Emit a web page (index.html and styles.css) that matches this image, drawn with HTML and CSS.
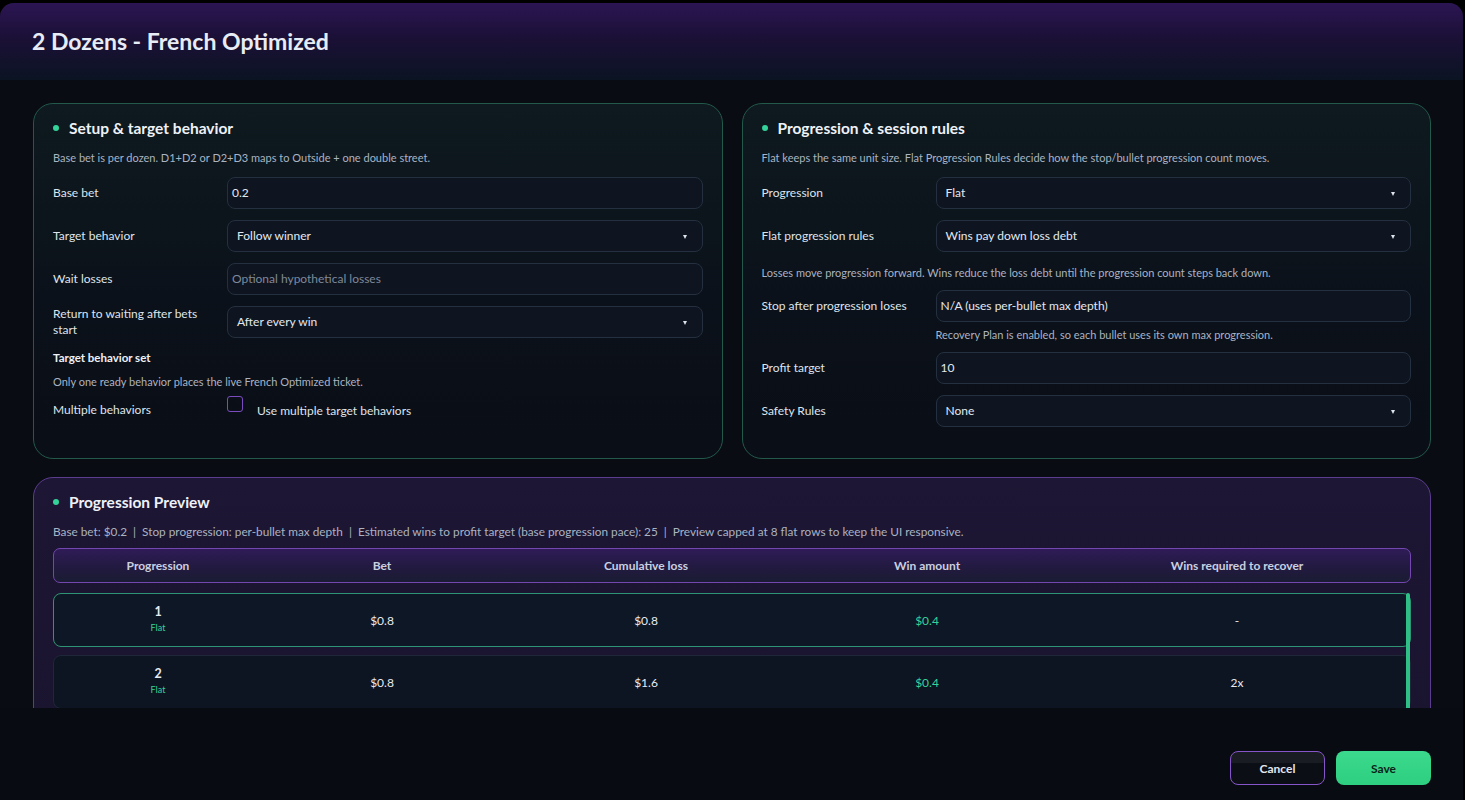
FILE: index.html
```html
<!DOCTYPE html>
<html>
<head>
<meta charset="utf-8">
<title>2 Dozens - French Optimized</title>
<link rel="stylesheet" href="styles.css">
</head>
<body>
<div class="modal">
  <header class="modal-head">
    <h2>2 Dozens - French Optimized</h2>
  </header>

  <div class="modal-body">
    <div class="cols">
      <section class="card card-green">
        <h3 class="card-title"><span class="dot"></span>Setup &amp; target behavior</h3>
        <p class="hint">Base bet is per dozen. D1+D2 or D2+D3 maps to Outside + one double street.</p>

        <div class="form">
          <label>Base bet</label>
          <div class="field">0.2</div>

          <label>Target behavior</label>
          <div class="field select">Follow winner</div>

          <label>Wait losses</label>
          <div class="field placeholder">Optional hypothetical losses</div>

          <label class="two-line">Return to waiting after bets start</label>
          <div class="field select">After every win</div>
        </div>

        <h4 class="sub">Target behavior set</h4>
        <p class="hint">Only one ready behavior places the live French Optimized ticket.</p>
        <div class="form check-row">
          <label>Multiple behaviors</label>
          <div class="check"><span class="box"></span><span>Use multiple target behaviors</span></div>
        </div>
      </section>

      <section class="card card-green">
        <h3 class="card-title"><span class="dot"></span>Progression &amp; session rules</h3>
        <p class="hint">Flat keeps the same unit size. Flat Progression Rules decide how the stop/bullet progression count moves.</p>

        <div class="form">
          <label>Progression</label>
          <div class="field select">Flat</div>

          <label>Flat progression rules</label>
          <div class="field select">Wins pay down loss debt</div>

          <p class="hint wide">Losses move progression forward. Wins reduce the loss debt until the progression count steps back down.</p>

          <label>Stop after progression loses</label>
          <div class="field">N/A (uses per-bullet max depth)</div>

          <p class="hint under">Recovery Plan is enabled, so each bullet uses its own max progression.</p>

          <label>Profit target</label>
          <div class="field">10</div>

          <label>Safety Rules</label>
          <div class="field select">None</div>
        </div>
      </section>
    </div>

    <section class="card card-purple">
      <h3 class="card-title"><span class="dot"></span>Progression Preview</h3>
      <p class="hint summary">Base bet: $0.2 &nbsp;|&nbsp; Stop progression: per-bullet max depth &nbsp;|&nbsp; Estimated wins to profit target (base progression pace): 25 &nbsp;|&nbsp; Preview capped at 8 flat rows to keep the UI responsive.</p>

      <div class="table-head">
        <span>Progression</span>
        <span>Bet</span>
        <span>Cumulative loss</span>
        <span>Win amount</span>
        <span>Wins required to recover</span>
      </div>

      <div class="rows-wrap">
        <div class="rows" id="rows"></div>
        <div class="thumb"></div>
      </div>
    </section>
  </div>

  <footer class="modal-foot">
    <button class="btn btn-cancel">Cancel</button>
    <button class="btn btn-save">Save</button>
  </footer>
</div>

<script>
  // flat progression: same bet every step, loss adds up, wins pay it back
  var bet = 0.8, win = 0.4;
  var rows = document.getElementById('rows');
  for (var i = 1; i <= 8; ++i) {
    var row = document.createElement('div');
    row.className = 'row' + (i === 1 ? ' current' : '');
    var loss = Math.round(bet * i * 10) / 10;
    var need = i === 1 ? '-' : (2 * (i - 1)) + 'x';
    row.innerHTML =
      '<span class="step"><b>' + i + '</b><small>Flat</small></span>' +
      '<span>$' + bet + '</span>' +
      '<span>$' + loss + '</span>' +
      '<span class="win">$' + win + '</span>' +
      '<span>' + need + '</span>';
    rows.appendChild(row);
  }
</script>
</body>
</html>
```

FILE: styles.css
```css
* {
    box-sizing: border-box;
}

html, body {
    margin: 0;
    height: 100%;
    background: #000;
    overflow: hidden;
}

body {
    font-family: "Lato", "Noto Sans", sans-serif;
    color: #e6eaf2;
    font-size: 12px;
    padding-top: 3px;
}

.modal {
    width: 1463px;
    height: 797px;
    display: flex;
    flex-direction: column;
    background: #090c13;
    border-radius: 14px 14px 0 0;
    overflow: hidden;
}

.modal-head {
    height: 77px;
    flex: none;
    padding: 0 32px;
    display: flex;
    align-items: center;
    background: linear-gradient(180deg, #2c1553 0%, #1b1036 45%, #0b1423 100%);
}

.modal-head h2 {
    margin: 0 0 1px;
    font-size: 23px;
    font-weight: 700;
    color: #e8ecf6;
}

.modal-body {
    flex: 1;
    overflow: hidden;
    padding: 23px 32px 0 33px;
}

.cols {
    display: grid;
    grid-template-columns: 1fr 1fr;
    gap: 19px;
    margin-bottom: 18px;
}

.card {
    border-radius: 20px;
    padding: 15px 19px 19px;
}

.card-green {
    border: 1px solid #22594b;
    background: linear-gradient(180deg, #0e1a1f 0%, #0b111a 55%, #0a0e16 100%);
    height: 356px;
}

.card-purple {
    border: 1px solid #5c3c8e;
    background: linear-gradient(180deg, #1d1634 0%, #19142e 100%);
    border-radius: 20px 20px 0 0;
    height: 300px;
}

.card-title {
    margin: 0;
    display: flex;
    align-items: center;
    gap: 10px;
    font-size: 15.5px;
    font-weight: 700;
    color: #eef1f7;
    line-height: 18px;
}

.dot {
    width: 6px;
    height: 6px;
    border-radius: 50%;
    background: #34d399;
}

.hint {
    margin: 14px 0 0;
    font-size: 11px;
    line-height: 14px;
    color: #aab3c2;
}

.hint.summary {
    font-size: 11.8px;
}

.form {
    display: grid;
    grid-template-columns: 160px 1fr;
    column-gap: 14px;
    row-gap: 11px;
    align-items: center;
    margin-top: 12px;
}

.form label {
    color: #dfe4ec;
    line-height: 16px;
}

.form .hint.wide {
    grid-column: 1 / 3;
    margin: 3px 0 -1px;
}

.form .hint.under {
    grid-column: 2;
    margin: -5px 0 -1px;
}

.field {
    position: relative;
    height: 32px;
    line-height: 30px;
    padding: 0 4px;
    border: 1px solid #243040;
    border-radius: 8px;
    background: #0e1521;
    color: #e3e8f0;
}

.field.select {
    padding-left: 9px;
}

/* little caret on the right of dropdowns */
.field.select::after {
    content: "";
    position: absolute;
    right: 15px;
    top: 14px;
    border-left: 2.5px solid transparent;
    border-right: 2.5px solid transparent;
    border-top: 4px solid #dfe4ec;
}

.field.placeholder {
    color: #7f8899;
}

.sub {
    margin: 13px 0 0;
    font-size: 11.5px;
    font-weight: 700;
    color: #eef1f7;
}

.sub + .hint {
    margin-top: 11px;
}

.check-row {
    margin-top: 7px;
    align-items: start;
}

.check-row label {
    padding-top: 6px;
}

.check {
    display: flex;
    gap: 14px;
    color: #dfe4ec;
}

.check span:last-child {
    padding-top: 7px;
}

.box {
    width: 16px;
    height: 16px;
    border: 1.5px solid #7a4cc0;
    border-radius: 3px;
    flex: none;
}

.table-head {
    display: grid;
    grid-template-columns: 208px 240px 288px 274px 1fr;
    margin-top: 9px;
    height: 35px;
    align-items: center;
    text-align: center;
    border: 1px solid #7446b0;
    border-radius: 7px;
    background: linear-gradient(180deg, #2f1b57 0%, #221a40 55%, #1a1c33 100%);
    font-size: 12px;
    font-weight: 700;
    color: #c9d0e0;
}

.rows-wrap {
    position: relative;
    margin-top: 10px;
}

.rows {
    max-height: 290px;
    overflow: hidden;
    display: flex;
    flex-direction: column;
    gap: 8px;
}

/* scroll thumb of the preview list */
.thumb {
    position: absolute;
    top: 0;
    right: 1px;
    width: 4px;
    height: 190px;
    border-radius: 3px;
    background: #2fbf86;
}

.row {
    flex: none;
    display: grid;
    grid-template-columns: 208px 240px 288px 274px 1fr;
    height: 54px;
    align-items: center;
    text-align: center;
    border: 1px solid #1f2838;
    border-radius: 8px;
    background: #0d1422;
    color: #e6eaf2;
}

.row.current {
    border-color: #2f9474;
    background: #0e1725;
}

.step {
    display: flex;
    flex-direction: column;
    align-items: center;
    line-height: 14px;
}

.step b {
    font-size: 12.5px;
}

.step small {
    font-size: 9px;
    color: #34d399;
    margin-top: 2px;
}

.win {
    color: #34d399;
}

.modal-foot {
    height: 92px;
    flex: none;
    display: flex;
    justify-content: flex-end;
    gap: 11px;
    padding: 43px 32px 0;
    background: #080b12;
}

.btn {
    width: 95px;
    height: 34px;
    border-radius: 8px;
    font-family: "Lato", "Noto Sans", sans-serif;
    font-size: 12px;
    font-weight: 700;
}

.btn-cancel {
    border: 1.5px solid #8656c8;
    background: linear-gradient(180deg, #1a1c24 0%, #1a1c24 35%, #0c0e15 36%, #0c0e15 100%);
    color: #e2e6ee;
}

.btn-save {
    border: none;
    background: linear-gradient(180deg, #3bd98d 0%, #2ecf80 100%);
    color: #0c2418;
}
```
